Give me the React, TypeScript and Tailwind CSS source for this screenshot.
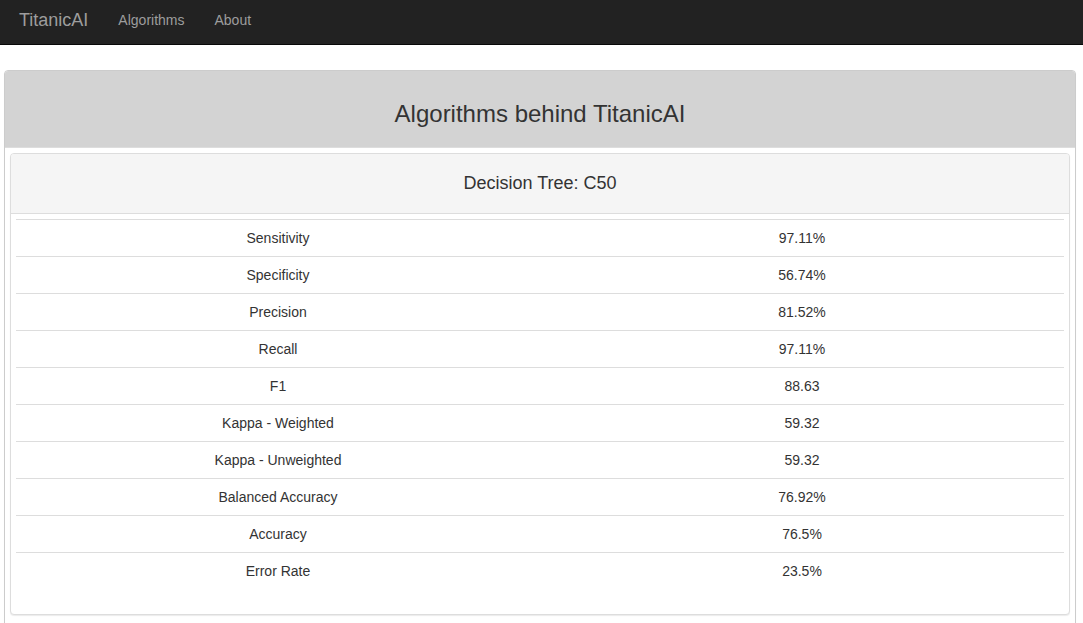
import React from 'react'

const METRICS: { label: string; value: string }[] = [
  { label: 'Sensitivity', value: '97.11%' },
  { label: 'Specificity', value: '56.74%' },
  { label: 'Precision', value: '81.52%' },
  { label: 'Recall', value: '97.11%' },
  { label: 'F1', value: '88.63' },
  { label: 'Kappa - Weighted', value: '59.32' },
  { label: 'Kappa - Unweighted', value: '59.32' },
  { label: 'Balanced Accuracy', value: '76.92%' },
  { label: 'Accuracy', value: '76.5%' },
  { label: 'Error Rate', value: '23.5%' },
]

const Navbar: React.FC = () => (
  <nav className="h-[45px] bg-[#222222] border-b border-[#080808] flex items-start pt-[10px] text-[#9d9d9d]">
    <a className="pl-[19px] pr-[15px] text-[18px] leading-[20px]">TitanicAI</a>
    <a className="px-[15px] text-[14px] leading-[20px]">Algorithms</a>
    <a className="px-[15px] text-[14px] leading-[20px]">About</a>
  </nav>
)

export default function App() {
  return (
    <div
      className="min-h-screen bg-white text-[#333333]"
      style={{ fontFamily: '"Liberation Sans", Arial, sans-serif' }}
    >
      <Navbar />
      <div className="mt-[25px] ml-[4px] mr-[7px] border border-[#cccccc] rounded-[4px] bg-white shadow-[0_1px_1px_rgba(0,0,0,0.05)]">
        <div className="bg-[#d3d3d3] border-b border-[#dddddd] rounded-t-[3px] px-[15px] pt-[30px] pb-[20px] text-center">
          <h3 className="text-[24px] leading-[26px] font-normal">Algorithms behind TitanicAI</h3>
        </div>
        <div className="p-[5px] pb-[15px]">
          <div className="border border-[#dddddd] rounded-[4px] bg-white shadow-[0_1px_1px_rgba(0,0,0,0.08)]">
            <div className="bg-[#f5f5f5] border-b border-[#dddddd] rounded-t-[3px] px-[15px] pt-[20px] pb-[21px] text-center">
              <h4 className="text-[18px] leading-[18px] font-normal">Decision Tree: C50</h4>
            </div>
            <div className="p-[5px] pb-[25px]">
              <table className="w-full border-collapse text-[14px] leading-[20px] border-t border-[#dddddd]">
                <tbody>
                  {METRICS.map((m, i) => (
                    <tr key={m.label} className={i > 0 ? 'border-t border-[#dddddd]' : ''}>
                      <td className="w-1/2 p-[8px] text-center">{m.label}</td>
                      <td className="w-1/2 p-[8px] text-center">{m.value}</td>
                    </tr>
                  ))}
                </tbody>
              </table>
            </div>
          </div>
        </div>
      </div>
    </div>
  )
}
